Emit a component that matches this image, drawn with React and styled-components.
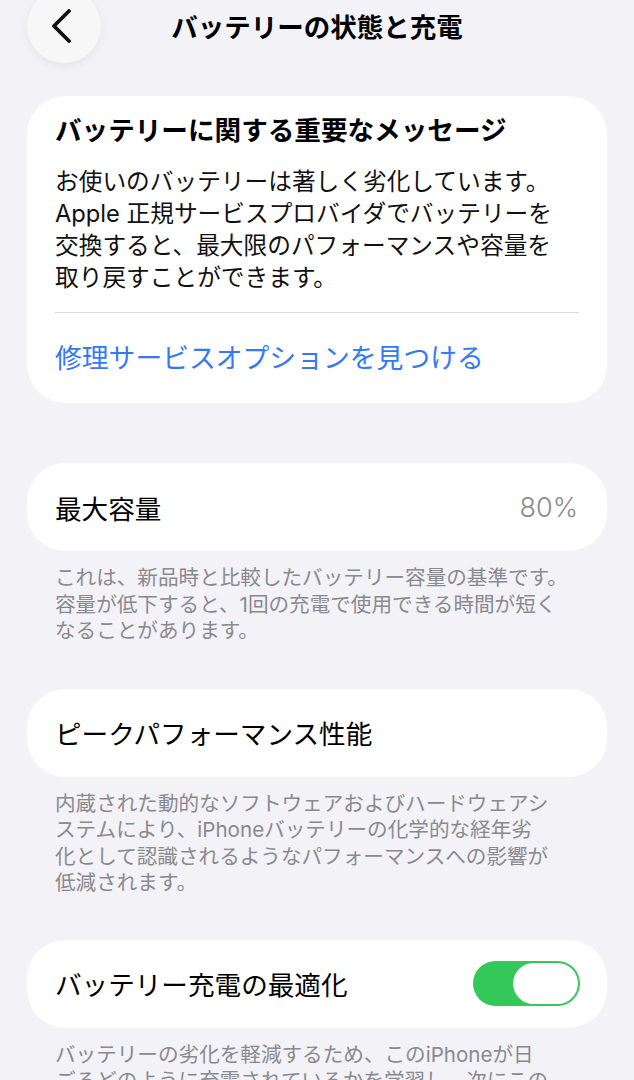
import React from 'react'
import styled, { createGlobalStyle } from 'styled-components'

const GlobalStyle = createGlobalStyle`
  html, body {
    margin: 0;
    padding: 0;
    background: #f2f2f7;
  }
  body {
    font-family: Inter, "Noto Sans CJK JP", sans-serif;
    color: #000;
    overflow: hidden;
  }
`

const Page = styled.div`
  width: 634px;
  height: 1080px;
  overflow: hidden;
  padding: 0 27px;
  box-sizing: border-box;
`

const Header = styled.div`
  display: grid;
  grid-template-columns: 74px 1fr 74px;
  align-items: start;
  margin-bottom: 33px;
`

const BackButton = styled.div`
  width: 74px;
  height: 74px;
  margin-top: -11px;
  border-radius: 50%;
  background: #f7f7f8;
  box-shadow: 0 3px 10px rgba(0, 0, 0, 0.06);
  display: flex;
  align-items: center;
  justify-content: center;
  svg {
    margin-left: -5px;
  }
`

const Title = styled.h1`
  margin: 0;
  text-align: center;
  font-size: 26.5px;
  line-height: 54px;
  font-weight: 700;
  white-space: nowrap;
`

const Card = styled.div`
  background: #fff;
  border-radius: 38px;
  padding: 0 28px;
`

const CardHeading = styled.div`
  font-size: 26.6px;
  line-height: 34px;
  font-weight: 700;
  padding-top: 17px;
`

const CardBody = styled.p`
  margin: 19px 0 0;
  font-size: 23.7px;
  line-height: 32px;
  color: #111;
  white-space: nowrap;
`

const Divider = styled.div`
  height: 1px;
  background: #d9d9de;
  margin-top: 18px;
`

const Link = styled.div`
  color: #3478f6;
  font-size: 26.8px;
  line-height: 34px;
  margin-top: 28px;
  padding-bottom: 28px;
`

const Row = styled.div`
  display: flex;
  align-items: center;
  justify-content: space-between;
  height: 88px;
  padding: 0 ${p => p.right || 29}px 0 28px;
  background: #fff;
  border-radius: 38px;
  margin-top: ${p => p.top}px;
`

const Label = styled.span`
  font-size: 26.6px;
  color: #000;
`

const Value = styled.span`
  font-size: 27px;
  color: #8a8a8e;
  font-weight: 300;
`

const Footnote = styled.p`
  margin: 14px 0 0;
  padding-left: 28px;
  font-size: 20.6px;
  line-height: 26.5px;
  color: #8a8a8e;
  white-space: nowrap;
`

const Toggle = styled.div`
  position: relative;
  width: 107px;
  height: 45px;
  border-radius: 23px;
  background: #34c759;
`

const Knob = styled.div`
  position: absolute;
  top: 2px;
  right: 2px;
  width: 65px;
  height: 41px;
  border-radius: 21px;
  background: #fff;
`

const Chevron = () => (
  <svg width="24" height="34" viewBox="0 0 24 34">
    <path d="M19 2 L4 17 L19 32" fill="none" stroke="#111" strokeWidth="3.8" strokeLinecap="round" strokeLinejoin="round" />
  </svg>
)

export default function App() {
  return (
    <Page>
      <GlobalStyle />
      <Header>
        <BackButton><Chevron /></BackButton>
        <Title>バッテリーの状態と充電</Title>
        <div />
      </Header>

      <Card>
        <CardHeading>バッテリーに関する重要なメッセージ</CardHeading>
        <CardBody>
          お使いのバッテリーは著しく劣化しています。<br />
          Apple 正規サービスプロバイダでバッテリーを<br />
          交換すると、最大限のパフォーマンスや容量を<br />
          取り戻すことができます。
        </CardBody>
        <Divider />
        <Link>修理サービスオプションを見つける</Link>
      </Card>

      <Row top={60}>
        <Label>最大容量</Label>
        <Value>80%</Value>
      </Row>
      <Footnote>
        これは、新品時と比較したバッテリー容量の基準です。<br />
        容量が低下すると、1回の充電で使用できる時間が短く<br />
        なることがあります。
      </Footnote>

      <Row top={44}>
        <Label>ピークパフォーマンス性能</Label>
      </Row>
      <Footnote>
        内蔵された動的なソフトウェアおよびハードウェアシ<br />
        ステムにより、iPhoneバッテリーの化学的な経年劣<br />
        化として認識されるようなパフォーマンスへの影響が<br />
        低減されます。
      </Footnote>

      <Row top={43} right={27}>
        <Label>バッテリー充電の最適化</Label>
        <Toggle><Knob /></Toggle>
      </Row>
      <Footnote>
        バッテリーの劣化を軽減するため、このiPhoneが日<br />
        ごろどのように充電されているかを学習し、次にこの
      </Footnote>
    </Page>
  )
}
